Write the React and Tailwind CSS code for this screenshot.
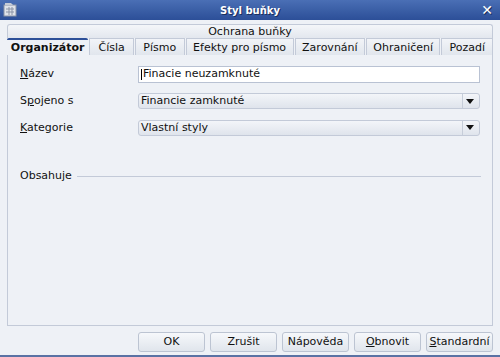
import { useState } from "react";

const tabs = [
  { label: "Organizátor", w: "w-[82px]" },
  { label: "Čísla", w: "w-[45px]" },
  { label: "Písmo", w: "w-[50px]" },
  { label: "Efekty pro písmo", w: "w-[109px]" },
  { label: "Zarovnání", w: "w-[71px]" },
  { label: "Ohraničení", w: "w-[75px]" },
  { label: "Pozadí", w: "w-[52px]" },
];

function Arrow() {
  return (
    <span className="flex h-full w-[14px] items-center justify-center border-l border-[#c6cdd9]">
      <svg width="8" height="5" viewBox="0 0 8 5">
        <path d="M0 0h8L4 5z" fill="#111" />
      </svg>
    </span>
  );
}

function Combo({ value }) {
  return (
    <div className="flex h-[16px] w-[342px] items-center justify-between rounded-[3px] border border-[#c3cad8] bg-gradient-to-b from-[#f3f5f9] to-[#dfe4ec] pl-[2px] pr-[3px]">
      <span>{value}</span>
      <Arrow />
    </div>
  );
}

export default function App() {
  const [active] = useState(0);

  return (
    <div className="h-[357px] w-[500px] overflow-hidden bg-[#eef1f6] text-[11px] text-[#111] [font-family:'DejaVu_Sans',sans-serif]">
      {/* title bar */}
      <div className="relative flex h-[20px] items-center justify-center bg-gradient-to-b from-[#4a6fb5] to-[#2c4f98] text-[10px] font-bold text-white [text-shadow:1px_1px_0_#1b2f5c]">
        <svg className="absolute left-[3px] top-[2px]" width="14" height="15" viewBox="0 0 14 15">
          <rect x="1" y="3" width="12" height="11" fill="#dfe3ea" stroke="#8a93a6" />
          <path d="M3 7h8M3 10h8M6 5v8M9 5v8" stroke="#8a93a6" />
          <path d="M2 1h6l2 2H2z" fill="#c5cbd6" />
        </svg>
        Styl buňky
        <span className="absolute right-[7px] top-[1px] text-[14px] leading-[18px]">✕</span>
      </div>

      <div className="px-[7px] pt-[4px]">
        {/* tab rows */}
        <div className="flex h-[14px] items-center justify-center rounded-t-[3px] border border-b-0 border-[#c3cad8] bg-gradient-to-b from-[#f4f6f9] to-[#e3e7ee] pt-[1px]">
          Ochrana buňky
        </div>
        <div className="flex h-[17px] items-stretch">
          {tabs.map((t, i) =>
            i === active ? (
              <div
                key={t.label}
                className={`${t.w} flex items-center justify-center rounded-t-[2px] border-t-2 border-[#2c4f98] bg-[#eef1f6] pt-[1px] font-bold`}
              >
                {t.label}
              </div>
            ) : (
              <div
                key={t.label}
                className={`${t.w} ml-[1px] flex items-center justify-center border border-b-0 border-[#c3cad8] bg-gradient-to-b from-[#f2f4f8] to-[#e1e6ed] pt-[2px]`}
              >
                {t.label}
              </div>
            )
          )}
        </div>

        {/* panel */}
        <div className="h-[271px] border-x border-b border-[#c3cad8] bg-[#eef1f6] pl-[12px] pr-[11px] pt-[11px]">
          <div className="grid grid-cols-[118px_1fr] items-center gap-y-[10px]">
            <span>
              <u>N</u>ázev
            </span>
            <div className="flex h-[17px] w-[342px] items-center border border-[#b9c2d3] bg-white pl-[2px]">
              <span className="mr-[1px] inline-block h-[11px] w-px bg-black" />
              Finacie neuzamknuté
            </div>
            <span>
              S<u>p</u>ojeno s
            </span>
            <Combo value="Financie zamknuté" />
            <span>
              <u>K</u>ategorie
            </span>
            <Combo value="Vlastní styly" />
          </div>

          <div className="mt-[32px] flex items-center gap-[5px]">
            <span>Obsahuje</span>
            <span className="h-px flex-1 border-b border-[#c3cad8] bg-[#9aa4b6]" />
          </div>
        </div>

        {/* buttons */}
        <div className="mt-[6px] flex justify-end gap-[5px]">
          {["OK", "Zrušit", "Nápověda", "Obnovit", "Standardní"].map((b) => (
            <button
              key={b}
              className="h-[20px] w-[67px] rounded-[3px] border border-[#bcc4d2] bg-gradient-to-b from-[#f6f8fb] to-[#e0e5ec] text-[11px]"
            >
              {b === "Obnovit" ? (
                <>
                  <u>O</u>bnovit
                </>
              ) : b === "Standardní" ? (
                <>
                  <u>S</u>tandardní
                </>
              ) : (
                b
              )}
            </button>
          ))}
        </div>
      </div>
      <div className="mt-[3px] h-[3px] bg-[#5a72a4]" />
    </div>
  );
}
